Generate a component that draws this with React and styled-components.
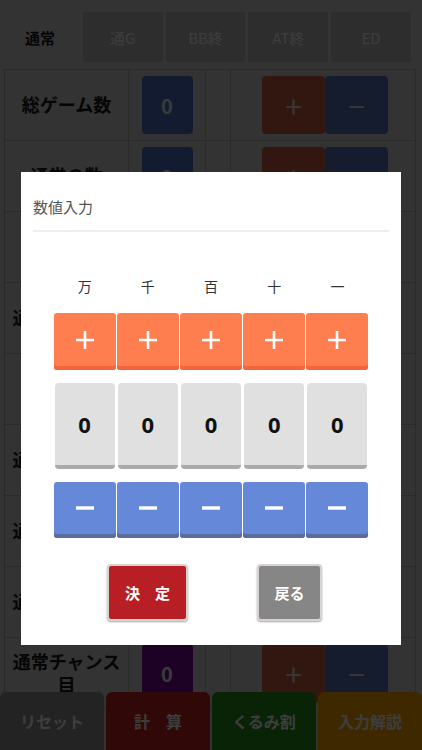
import React, { useState } from 'react';
import styled, { createGlobalStyle } from 'styled-components';

const GlobalStyle = createGlobalStyle`
  html, body {
    margin: 0;
    padding: 0;
    background: #cbcbcb;
    font-family: "Noto Sans CJK JP", "Noto Sans", sans-serif;
  }
  * { box-sizing: border-box; }
`;

const rows = [
  { label: '総ゲーム数', value: '0', tone: 'blue' },
  { label: '通常の数', value: '0', tone: 'blue' },
  { label: '通常ベル', value: '0', tone: 'blue' },
  { label: '通常リプレイ', value: '0', tone: 'blue' },
  { label: '通常スイカ', value: '0', tone: 'blue' },
  { label: '通常チェリー', value: '0', tone: 'blue' },
  { label: '通常角チェリ', value: '0', tone: 'blue' },
  { label: '通常中段チェ', value: '0', tone: 'blue' },
  { label: '通常チャンス目', value: '0', tone: 'purple' },
];

const places = ['万', '千', '百', '十', '一'];

const App = () => {
  const [digits, setDigits] = useState([0, 0, 0, 0, 0]);

  function step(i, d) {
    setDigits((prev) => prev.map((v, k) => (k === i ? (v + d + 10) % 10 : v)));
  }

  return (
    <Page>
      <GlobalStyle />
      <Tabs>
        <Tab active>通常</Tab>
        <Tab>通G</Tab>
        <Tab>BB終</Tab>
        <Tab>AT終</Tab>
        <Tab>ED</Tab>
      </Tabs>

      <Table>
        {rows.map(({ label, value, tone }) => (
          <Row key={label}>
            <LabelCell>{label}</LabelCell>
            <ValueCell>
              <ValueButton tone={tone}>{value}</ValueButton>
            </ValueCell>
            <SpacerCell />
            <ActionCell>
              <PlusMini>+</PlusMini>
              <MinusMini>−</MinusMini>
            </ActionCell>
          </Row>
        ))}
      </Table>

      <BottomBar>
        <BottomButton tone='#8a8a8a'>リセット</BottomButton>
        <BottomButton tone='#c02222'>計　算</BottomButton>
        <BottomButton tone='#238a14'>くるみ割</BottomButton>
        <BottomButton tone='#f2a000'>入力解説</BottomButton>
      </BottomBar>

      <Overlay>
        <Modal>
          <ModalTitle>数値入力</ModalTitle>
          <Divider />
          <Pad>
            {places.map((p) => (
              <PlaceLabel key={p}>{p}</PlaceLabel>
            ))}
            {places.map((p, i) => (
              <StepButton key={'p' + p} kind='plus' onClick={() => step(i, 1)}>
                <PlusIcon />
              </StepButton>
            ))}
            {digits.map((d, i) => (
              <DigitBox key={'d' + i}>{d}</DigitBox>
            ))}
            {places.map((p, i) => (
              <StepButton key={'m' + p} kind='minus' onClick={() => step(i, -1)}>
                <MinusIcon />
              </StepButton>
            ))}
          </Pad>
          <Actions>
            <ActionButton tone='#b81f24' wide>決　定</ActionButton>
            <ActionButton tone='#868686'>戻る</ActionButton>
          </Actions>
        </Modal>
      </Overlay>
    </Page>
  );
};

const PlusIcon = () => (
  <svg width='20' height='20' viewBox='0 0 20 20'>
    <path d='M10 1v18M1 10h18' stroke='#fff' strokeWidth='2.6' />
  </svg>
);

const MinusIcon = () => (
  <svg width='20' height='6' viewBox='0 0 20 6'>
    <path d='M1 3h18' stroke='#fff' strokeWidth='3.4' />
  </svg>
);

const Page = styled.div`
  position: relative;
  width: 422px;
  height: 750px;
  overflow: hidden;
  background: #cbcbcb;
`;

const Tabs = styled.div`
  display: flex;
  gap: 3px;
  padding: 12px 11px 0 0;
  height: 62px;
`;

const Tab = styled.div`
  flex: 1;
  display: flex;
  align-items: center;
  justify-content: center;
  background: ${({ active }) => (active ? 'transparent' : '#b2b2b2')};
  color: ${({ active }) => (active ? '#111' : '#f4f4f4')};
  font-size: 15px;
  font-weight: ${({ active }) => (active ? 700 : 400)};
`;

const Table = styled.div`
  margin: 7px 6px 0 4px;
  border-top: 1px solid #a8a8a8;
  border-left: 1px solid #a8a8a8;
`;

const Row = styled.div`
  display: grid;
  grid-template-columns: 124px 77px 25px 1fr;
  height: 71px;
`;

const Cell = styled.div`
  display: flex;
  align-items: center;
  justify-content: center;
  border-right: 1px solid #a8a8a8;
  border-bottom: 1px solid #a8a8a8;
`;

const LabelCell = styled(Cell)`
  font-size: 18px;
  font-weight: 700;
  color: #151515;
  text-align: center;
  line-height: 1.3;
  padding: 0 6px;
`;

const ValueCell = styled(Cell)``;

const SpacerCell = styled(Cell)``;

const ActionCell = styled(Cell)`
  padding-left: 4px;
`;

const ValueButton = styled.div`
  width: 51px;
  height: 58px;
  border-radius: 4px;
  display: flex;
  align-items: center;
  justify-content: center;
  font-size: 20px;
  font-weight: 700;
  color: #e8e8e8;
  background: ${({ tone }) => (tone === 'purple' ? '#7a0a92' : '#4b6dbe')};
`;

const MiniButton = styled.div`
  width: 63px;
  height: 58px;
  border-radius: 4px;
  display: flex;
  align-items: center;
  justify-content: center;
  font-size: 30px;
  color: #d8d8d8;
`;

const PlusMini = styled(MiniButton)`
  background: #c45c40;
`;

const MinusMini = styled(MiniButton)`
  background: #5570b8;
`;

const BottomBar = styled.div`
  position: absolute;
  left: 0;
  right: 0;
  bottom: 0;
  display: flex;
  gap: 2px;
  height: 58px;
`;

const BottomButton = styled.div`
  flex: 1;
  display: flex;
  align-items: center;
  justify-content: center;
  background: ${({ tone }) => tone};
  border-radius: 6px 6px 0 0;
  color: #f2f2f2;
  font-size: 16px;
  font-weight: 700;
`;

const Overlay = styled.div`
  position: absolute;
  inset: 0;
  background: rgba(0, 0, 0, 0.75);
  display: flex;
  justify-content: center;
  align-items: flex-start;
  padding-top: 172px;
`;

const Modal = styled.div`
  width: 380px;
  height: 473px;
  background: #ffffff;
  padding: 0 12px;
`;

const ModalTitle = styled.div`
  padding-top: 24px;
  height: 58px;
  font-size: 15px;
  color: #555;
`;

const Divider = styled.div`
  height: 2px;
  background: #eeeeee;
`;

const Pad = styled.div`
  display: grid;
  grid-template-columns: repeat(5, 63.2px);
  grid-template-rows: 36px 57px 86px 56px;
  row-gap: 13px;
  justify-content: center;
  margin-top: 32px;
`;

const PlaceLabel = styled.div`
  display: flex;
  align-items: flex-end;
  justify-content: center;
  padding-bottom: 4px;
  font-size: 14px;
  color: #333;
`;

const StepButton = styled.button`
  all: unset;
  box-sizing: border-box;
  cursor: pointer;
  display: flex;
  align-items: center;
  justify-content: center;
  border-radius: 3px;
  margin: 0 0.5px;
  background: ${({ kind }) => (kind === 'plus' ? '#ff7e50' : '#6688d9')};
  box-shadow: inset 0 -4px 0
    ${({ kind }) => (kind === 'plus' ? '#f4643e' : '#5a6d9c')};
  padding-bottom: 4px;
`;

const DigitBox = styled.div`
  display: flex;
  align-items: center;
  justify-content: center;
  margin: 0 1.5px;
  border-radius: 4px;
  background: #e0e0e0;
  border-bottom: 4px solid #aaaaaa;
  font-family: "Noto Sans", sans-serif;
  font-size: 22px;
  font-weight: 700;
  color: #111;
`;

const Actions = styled.div`
  display: flex;
  justify-content: center;
  gap: 69px;
  margin-top: 26px;
  padding-left: 7px;
`;

const ActionButton = styled.button`
  all: unset;
  box-sizing: border-box;
  cursor: pointer;
  width: ${({ wide }) => (wide ? '81px' : '65px')};
  height: 57px;
  display: flex;
  align-items: center;
  justify-content: center;
  border-radius: 4px;
  border: 2px solid #d9d2d2;
  box-shadow: 0 1px 2px rgba(0, 0, 0, 0.35);
  background: ${({ tone }) => tone};
  color: #fff;
  font-size: 15px;
  font-weight: 700;
`;

export default App;
